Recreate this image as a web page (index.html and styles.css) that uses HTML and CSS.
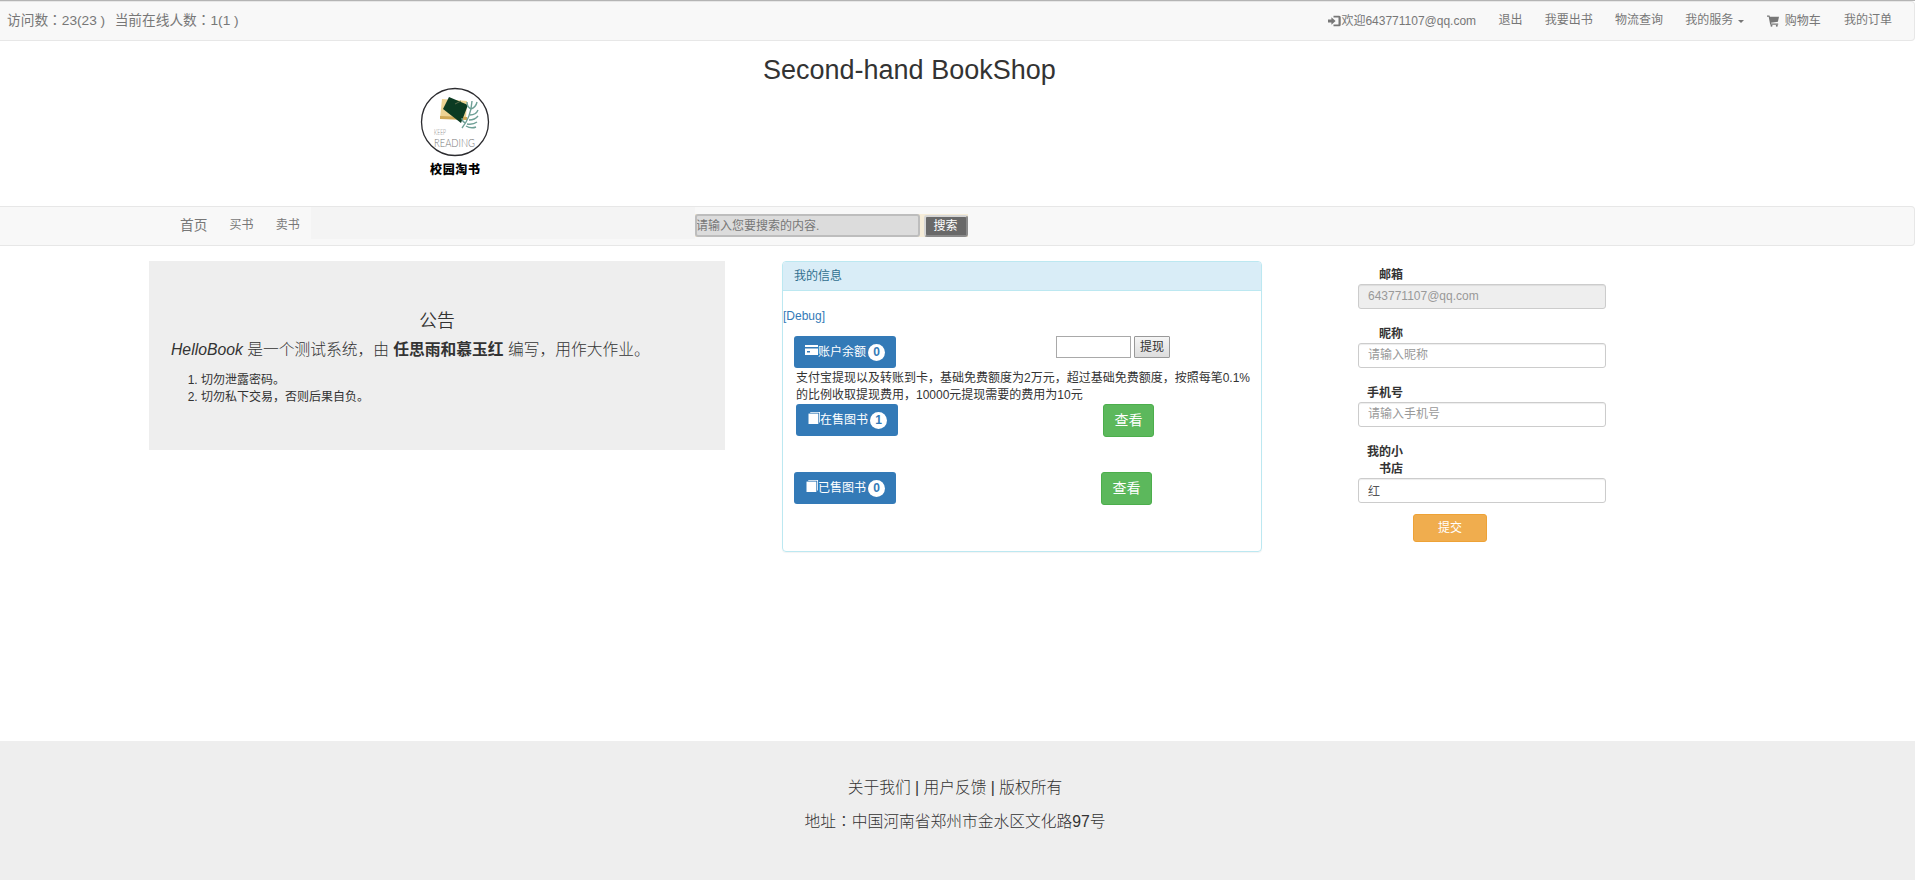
FILE: index.html
```html
<!DOCTYPE html>
<html lang="zh-CN">
<head>
<meta charset="utf-8">
<title>Second-hand BookShop</title>
<link rel="stylesheet" href="styles.css">
</head>
<body>
<nav class="topbar">
  <div class="counter">访问数<span class="colon" lang="zh-TW">：</span>23(23 )<span class="online">当前在线人数<span class="colon" lang="zh-TW">：</span>1(1 )</span></div>
  <ul class="toplinks">
    <li class="low"><svg class="glyph login" viewBox="0 0 13 12"><path d="M0 4.600h3.400V2.200L7.600 6 3.400 9.800V7.400H0z"/><path d="M5.500 .8h5.700q1.500 0 1.500 1.500v7.400q0 1.500-1.500 1.500H5.500V9.500h5V2.500h-5z"/></svg>欢迎643771107@qq.com</li>
    <li>退出</li>
    <li>我要出书</li>
    <li>物流查询</li>
    <li>我的服务<span class="caret"></span></li>
    <li class="low"><svg class="glyph cart" viewBox="0 0 12 12"><path d="M0 .5h2.500l.4 1.300H12L10.900 6.800 4 7.700l.2.800h7v1.200H3.200L1.700 1.700H0z"/><circle cx="4.500" cy="10.800" r="1"/><circle cx="9.800" cy="10.800" r="1"/></svg>购物车</li>
    <li>我的订单</li>
  </ul>
</nav>

<header class="masthead">
  <svg class="logo" viewBox="0 0 72 94">
    <circle cx="36" cy="36" r="33.500" fill="#fff" stroke="#2b2b2f" stroke-width="1.300"/>
    <path d="M23 13l25 2-1 18-26-1z" fill="#ecd293"/>
    <path d="M21 30l27 1v3l-27-1z" fill="#cfa857"/>
    <path d="M30 11l19 8-7 18-18-14z" fill="#0c3b22"/>
    <path d="M36 18l6-3" stroke="#5d6c4a" stroke-width="1"/>
    <path d="M43 42q9-11 10-27M52 23q-4-2-4-7M52 23q5-2 6-7M51 29q6 0 8-5M50 34q6 0 9-4M48 38q6 1 10-2M47 40q5 3 10 1M47 37q-4-1-4-5" fill="none" stroke="#6fa096" stroke-width="1.400"/>
    <text x="15" y="49" class="keep" textLength="12" lengthAdjust="spacingAndGlyphs">KEEP</text>
    <text x="15" y="60.500" class="reading" textLength="41" lengthAdjust="spacingAndGlyphs">READING</text>
    <text x="11" y="88" class="brand" textLength="50">校园淘书</text>
  </svg>
  <h1>Second-hand BookShop</h1>
</header>

<nav class="mainbar">
  <div class="menu"><a class="home">首页</a><a>买书</a><a>卖书</a></div>
  <div class="shade"></div>
  <form class="search"><input type="text" placeholder="请输入您要搜索的内容."><button type="button">搜索</button></form>
</nav>

<main class="content">
  <section class="notice">
    <h2>公告</h2>
    <p><em>HelloBook</em> 是一个测试系统，由 <strong>任思雨和慕玉红</strong> 编写，用作大作业。</p>
    <ol><li>切勿泄露密码。</li><li>切勿私下交易，否则后果自负。</li></ol>
  </section>

  <section class="panel">
    <h3>我的信息</h3>
    <a class="debug">[Debug]</a>
    <div class="row">
      <span class="btn"><svg class="glyph card" viewBox="0 0 13 10"><path fill-rule="evenodd" d="M0 0h13v2H0zM0 3.500h13V10H0zM2 6v1.500h3V6z"/></svg>账户余额<b>0</b></span>
      <span class="cash"><input type="text"><button type="button">提现</button></span>
    </div>
    <p class="fee">支付宝提现以及转账到卡，基础免费额度为2万元，超过基础免费额度，按照每笔0.1%的比例收取提现费用，10000元提现需要的费用为10元</p>
    <div class="row selling">
      <span class="btn book"><svg class="glyph" viewBox="0 0 12 12"><path d="M2.500 0H12v10l-.8 1V.8H2z"/><path d="M.5 1.600H10.300V12H.5z"/></svg>在售图书<b>1</b></span>
      <span class="view">查看</span>
    </div>
    <div class="row sold">
      <span class="btn book"><svg class="glyph" viewBox="0 0 12 12"><path d="M2.500 0H12v10l-.8 1V.8H2z"/><path d="M.5 1.600H10.300V12H.5z"/></svg>已售图书<b>0</b></span>
      <span class="view">查看</span>
    </div>
  </section>

  <form class="profile">
    <label>邮箱</label>
    <input type="text" value="643771107@qq.com" disabled>
    <label>昵称</label>
    <input type="text" placeholder="请输入昵称">
    <label>手机号</label>
    <input type="text" placeholder="请输入手机号">
    <label>我的小书店</label>
    <input type="text" value="红">
    <button type="button">提交</button>
  </form>
</main>

<footer class="footer">
  <p>关于我们 | 用户反馈 | 版权所有</p>
  <p>地址<span class="colon" lang="zh-TW">：</span>中国河南省郑州市金水区文化路97号</p>
</footer>
</body>
</html>
```
FILE: styles.css
```css
* { box-sizing: border-box; }
body {
  margin: 0;
  height: 886px;
  overflow: hidden;
  display: flex;
  flex-direction: column;
  background: #fff;
  color: #333;
  font: 12px/17px "Liberation Sans", "Noto Sans CJK SC", sans-serif;
  border-top: 1px solid #b4b4b4;
}
input, button { font: inherit; margin: 0; }
h1, h2, h3, p, ol, ul { margin: 0; padding: 0; font-weight: 400; }
.glyph { width: 12px; height: 12px; fill: currentColor; flex: none; }
.colon { font-family: "Noto Sans CJK TC", sans-serif; line-height: 1; }

.topbar, .mainbar {
  display: flex;
  height: 40px;
  flex: none;
  background: #f8f8f8;
  border: 1px solid #e7e7e7;
  border-left: 0;
  border-radius: 0 4px 4px 0;
  color: #777;
}
.topbar { justify-content: space-between; padding: 0 22px 0 7px; }
.counter { font-size: 13.700px; line-height: 37px; white-space: pre; }
.online { margin-left: 9.500px; }
.toplinks { display: flex; list-style: none; gap: 22.300px; line-height: 36px; }
.toplinks li { display: flex; align-items: center; height: 36px; white-space: nowrap; }
.toplinks .low { height: 38px; }
.login { width: 13px; }
.cart { margin-right: 6px; }
.caret { margin-left: 5px; margin-top: 2px; border: 3px solid transparent; border-top-color: #777; border-bottom: 0; }
.toplinks li:last-child { margin-left: 1px; }

.masthead { display: flex; align-items: flex-start; height: 165px; flex: none; padding-left: 419px; }
.logo { width: 72px; height: 94px; margin-top: 45px; flex: none; }
.keep { font: 300 8px "Lato", sans-serif; fill: #888; }
.reading { font: 300 12px "Lato", sans-serif; fill: #777; }
.brand { font: 900 12px "Noto Sans CJK SC", sans-serif; fill: #000; }
.masthead h1 { margin: 13px 0 0 272px; font-size: 27px; line-height: 32px; }

.menu { display: flex; gap: 22.200px; width: 311px; padding-left: 180px; font-size: 12px; line-height: 36px; }
.menu .home { font-size: 13.700px; line-height: 37px; }
.shade { width: 384px; height: 32px; background: #f4f4f4; }
.search { display: flex; align-items: flex-end; gap: 4px; height: 23px; margin-top: 7px; background: #f5ecd8; }
.search input { width: 225px; height: 23px; padding: 0; border: 2px solid #bdbdbd; border-radius: 3px; background: #dcdcdc; color: #777; text-indent: -1px; }
.search input::placeholder { color: #777; }
.search button { width: 44px; height: 22px; padding: 0 1px 0 0; line-height: 17px; border: 2px solid; border-color: #d6d6d6 #8a8a8a #8a8a8a #d6d6d6; border-radius: 3px; background: #696969; color: #fff; }

.content { display: flex; align-items: flex-start; height: 495px; flex: none; padding: 15px 0 0 149px; }
.notice { width: 576px; height: 189px; padding: 47px 22px 0; background: #eee; }
.notice h2 { font-size: 17.800px; line-height: 26px; text-align: center; font-weight: 350; }
.notice p { font-size: 15.750px; line-height: 23px; margin-top: 4px; font-weight: 300; white-space: nowrap; }
.notice strong { font-weight: 700; }
.notice ol { margin-top: 11px; padding-left: 30px; }

.panel { width: 480px; height: 291px; margin-left: 57px; border: 1px solid #bce8f1; border-radius: 4px; box-shadow: 0 1px 1px rgba(0,0,0,.05); }
.panel h3 { height: 29px; padding-left: 11px; font-size: 12px; line-height: 28px; color: #31708f; background: #d9edf7; border-bottom: 1px solid #bce8f1; border-radius: 3px 3px 0 0; }
.debug { display: block; margin-top: 17px; color: #337ab7; }
.row { display: flex; align-items: flex-start; padding-left: 11px; margin-top: 11px; height: 32px; }
.btn { display: flex; align-items: center; width: 102px; height: 32px; padding-left: 11px; border-radius: 3px; background: #337ab7; color: #fff; line-height: 15px; }
.btn .glyph { margin-top: -4px; }
.btn .card { width: 13px; height: 10px; }
.btn b { width: 17px; height: 17px; margin-left: 2px; border-radius: 9px; background: #fff; color: #337ab7; text-align: center; line-height: 17px; }
.book { padding-left: 12px; }
.cash { display: flex; gap: 3px; margin-left: 160px; }
.cash input { width: 75px; height: 22px; border: 1px solid #a9a9a9; }
.cash button { width: 36px; height: 22px; padding: 0; border: 1px solid #999; border-radius: 1px; background: linear-gradient(#f5f5f5, #ddd); color: #333; line-height: 18px; }
.fee { padding: 2px 10px 0 13px; height: 36px; }
.view { width: 51px; height: 33px; margin-left: 205px; border: 1px solid #4cae4c; border-radius: 3px; background: #5cb85c; color: #fff; font-size: 14px; line-height: 31px; text-align: center; }
.selling { margin-top: 0; padding-left: 13px; }
.sold { margin-top: 36px; }

.profile { display: flex; flex-direction: column; width: 248px; margin-left: 96px; padding-top: 6px; }
.profile label { width: 45px; font-weight: 700; text-align: right; }
.profile input { width: 248px; height: 25px; margin: 0 0 17px; padding: 0 9px 1px; border: 1px solid #ccc; border-radius: 3px; background: #fff; color: #555; box-shadow: inset 0 1px 1px rgba(0,0,0,.075); }
.profile input::placeholder { color: #999; }
.profile input:disabled { background: #eee; color: #999; }
.profile button { width: 74px; height: 28px; margin: -6px 0 0 55px; border: 1px solid #eea236; border-radius: 3px; background: #f0ad4e; color: #fff; }

.footer { height: 139px; flex: none; padding: 30px 5px 0 0; background: #eee; text-align: center; font-size: 15.750px; line-height: 34px; }
.footer p { font-weight: 300; }
```
